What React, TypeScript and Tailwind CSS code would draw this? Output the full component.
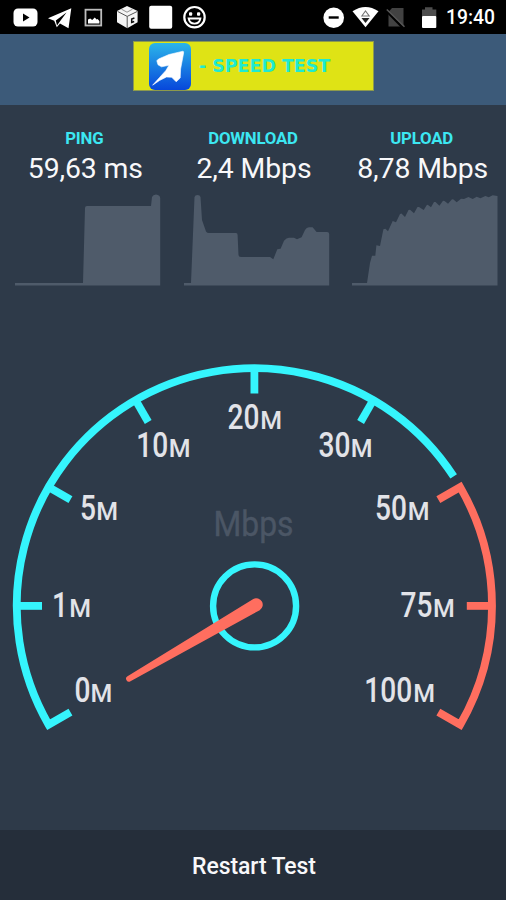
import React from "react";

const CX = 254.4;
const CY = 605.9 - 310;
const R = 237.6;
const R_TICK = 212.4;

function polar(deg: number, r: number): string {
  const a = (deg * Math.PI) / 180;
  return `${(CX + r * Math.cos(a)).toFixed(2)} ${(CY + r * Math.sin(a)).toFixed(2)}`;
}

function StatusBar() {
  return (
    <div className="flex h-[34px] shrink-0 items-center bg-black">
      <svg className="h-[34px] w-[215px]" viewBox="0 0 215 34">
        <rect x="13.5" y="8.5" width="24" height="18" rx="4.5" fill="#fff" />
        <path d="M23 13.500l6.500 4-6.500 4z" fill="#000" />
        <path d="M48 18.3L71.3 8.2 68.5 28.3 60 23.6 56.8 27.2 54.200 20.8z" fill="#fff" />
        <path d="M55.8 20.6L66.5 12.5 59.500 22 57 25.600z" fill="#000" />
        <rect x="85.5" y="9.7" width="15.7" height="15.8" fill="none" stroke="#bdbdbd" strokeWidth="1.8" />
        <path d="M88 23.500v-4l2.2-1 2 1.500 2.6-2.400 1.8 1.900 1-.6 1.8 2V23.500z" fill="#fff" />
        <path d="M127 6l10.6 5v11.2L127.300 28.300 117 22.200V11z" fill="#f4f4f4" />
        <path d="M117.500 11.400L127.200 16.400 137.400 11.400M127.200 16.400V28" fill="none" stroke="#555" strokeWidth="1" />
        <path d="M121.500 9.200l5.500 3 5.500-3" fill="none" stroke="#777" strokeWidth=".8" />
        <path d="M134.400 18l-2.700 1v3.500l2.500-1" fill="none" stroke="#111" strokeWidth="1.500" />
        <rect x="149.200" y="5.700" width="23" height="23" rx="2" fill="#fff" />
        <circle cx="194.500" cy="17.200" r="10.200" fill="none" stroke="#fff" strokeWidth="2.200" />
        <rect x="189" y="12.300" width="3.200" height="3.500" rx="1" fill="#fff" />
        <rect x="197" y="12.300" width="3.200" height="3.500" rx="1" fill="#fff" />
        <path d="M188.600 18.500h11.800c-.6 3.300-3 5.100-5.900 5.100s-5.300-1.800-5.900-5.100z" fill="none" stroke="#fff" strokeWidth="1.800" />
      </svg>
      <svg className="ml-auto h-[34px] w-[126px]" viewBox="320 0 126 34">
        <circle cx="333.700" cy="17.700" r="10.300" fill="#fff" />
        <rect x="328.700" y="16.300" width="10" height="2.400" fill="#000" />
        <path d="M352.500 11.300Q365.500 2.500 378.500 11.300L365.500 27.300z" fill="#fff" />
        <path d="M361.800 16l3.700-5 3.700 5z" fill="none" stroke="#777" strokeWidth="1.100" />
        <path d="M361.500 18h8l-4 5z" fill="#222" />
        <path d="M392 8h11.500v18.500H388.500V12z" fill="#424242" />
        <path d="M386 10.500L403 28" stroke="#000" strokeWidth="2.500" />
        <path d="M386.800 9.500L404.500 26.800" stroke="#555" strokeWidth="1.500" />
        <path d="M422 9.500h3V7.300h7.500v2.200h3.800V16.500H422z" fill="#4d4d4d" />
        <rect x="422" y="16" width="14.300" height="12" rx="1" fill="#fff" />
      </svg>
      <span className="w-[60px] whitespace-nowrap pt-[2px] text-[19.300px] leading-none font-medium text-white">19:40</span>
    </div>
  );
}

function Header() {
  return (
    <header className="flex h-[71px] shrink-0 items-start bg-[#3c5a79] pt-[7px] pl-[133px]">
      <div className="flex h-[50px] w-[241px] items-center border border-[#8d9a4c] bg-[#dfe315] pl-[15px]">
        <svg className="h-[47px] w-[42px] shrink-0" viewBox="0 0 42 47">
          <defs>
            <linearGradient id="logo" x1="0" y1="0" x2="0" y2="1">
              <stop offset="0" stopColor="#2bb5ea" />
              <stop offset="1" stopColor="#0747db" />
            </linearGradient>
          </defs>
          <rect width="42" height="47" rx="6" fill="url(#logo)" />
          <path d="M34 8.200Q34.800 8.300 34.600 10L31.600 26 31.200 35 27.200 38.800 22.700 34.300 17.500 34 10.500 37.500 3.600 42.200 10.500 34.500 16.700 27.700 20 22.300 12.500 23.800 9 21.800 7.800 17.800 9.500 16 20 11.500z" fill="#fff" stroke="#fff" strokeWidth=".6" strokeLinejoin="round" />
        </svg>
        <span className="mt-[1px] ml-[8px] whitespace-pre font-['DejaVu_Sans',sans-serif] text-[17.500px] leading-none font-bold tracking-[-0.050px] text-[#20ead0]">- SPEED TEST</span>
      </div>
    </header>
  );
}

const metrics = [
  {
    label: "PING",
    value: "59,63 ms",
    shape: "M0 90H68L70 15Q70 13 72 13H136L137 4Q138 1.500 141 1.500Q145.200 2 145.200 5V92.500H0z",
  },
  {
    label: "DOWNLOAD",
    value: "2,4 Mbps",
    shape:
      "M0 90H7L10.500 4Q11 2 13.500 2T16.500 4L18 27 22 38.500Q23 40 25 40H52Q53.600 40 53.600 42L54.500 62Q54.500 64 57 64H86L89.300 66.300 93.300 56.300 96.600 55.700 100 47.700Q102.500 44.700 105 44.700H110L113 46.300 117.600 44.300 121 37Q122.500 34.300 125 34.300H128.600L132.600 39H143Q145.200 39 145.200 41V92.500H0z",
  },
  {
    label: "UPLOAD",
    value: "8,78 Mbps",
    shape:
      "M0 90H15L18 70 20 62.700H23.300L24.400 52.300 28 53 31.400 36.300 33.400 35.700 36 38.300 40.700 28 44 29.300 48 21 49.500 20.500 53 24 56.500 17 58 16.700 62 20.300 65.500 14 67 14 71.700 17 75 11.700 76 12 79 14.300 82 9 83.500 9 87.400 12.700 91 7.700 92.500 8 96 10.700 100 6.300 101.500 6.500 104.700 9.300 109 5.700 112 6 116.400 4 120.700 6 124.700 3.700 128.400 5.300 133.400 3 136.700 4.300 140.700 2.300 145.500 3V92.500H0z",
  },
];

function Metrics() {
  return (
    <section className="grid shrink-0 grid-cols-3">
      {metrics.map((m) => (
        <div key={m.label} className="flex flex-col">
          <div className="mt-[23px] text-center text-[16.800px] leading-5 font-bold tracking-[-0.200px] text-[#3ce7f2]">{m.label}</div>
          <div className="mt-[5px] whitespace-nowrap pl-[2px] text-center text-[28.400px] leading-[32px] tracking-[-0.120px] text-[#f8f8fa]">{m.value}</div>
          <svg className="mt-[8px] ml-[15px] h-[94px] w-[146px]" viewBox="0 0 146 94">
            <path d={m.shape} fill="#4f5b6a" />
          </svg>
        </div>
      ))}
    </section>
  );
}

// end: right edge of the digits, unit: left edge of the small M, y: baseline
const marks = [
  { n: "0", end: 89.8, unit: 92.3, y: 701.7 },
  { n: "1", end: 67.5, unit: 71, y: 616.7 },
  { n: "5", end: 95.5, unit: 98, y: 520 },
  { n: "10", end: 167.7, unit: 170.4, y: 456.7 },
  { n: "20", end: 259, unit: 262, y: 429.3 },
  { n: "30", end: 350, unit: 352.4, y: 456.7 },
  { n: "50", end: 406.5, unit: 409.5, y: 520 },
  { n: "75", end: 432, unit: 434.7, y: 616.7 },
  { n: "100", end: 411.7, unit: 415, y: 701.7 },
];

function Gauge() {
  return (
    <svg className="mt-[23px] h-[440px] w-[506px] shrink-0" viewBox="0 0 506 440">
      <g fill="none" strokeWidth="7.800">
        <g stroke="#35f5fd">
          <path d={`M${polar(150, R_TICK)}L${polar(150, R)}A${R} ${R} 0 0 1 ${polar(-33, R)}`} />
          {[180, 210, 240, 270, 300].map((a) => (
            <path key={a} d={`M${polar(a, R_TICK)}L${polar(a, R)}`} />
          ))}
          <circle cx="254.600" cy={CY} r="41.500" strokeWidth="6.400" />
        </g>
        <g stroke="#ff6e5f">
          <path d={`M${polar(-30, R_TICK)}L${polar(-30, R)}A${R} ${R} 0 0 1 ${polar(30, R)}L${polar(30, R_TICK)}`} />
          <path d={`M${polar(0, R_TICK)}L${polar(0, R)}`} />
        </g>
      </g>
      <path d="M127.500 366.200L253.300 288.900A6.500 6.500 0 0 1 259.700 300.200L130.500 371.200A2.900 2.900 0 0 1 127.500 366.200z" fill="#ff6e5f" />
      <g fill="#e2e3e8" fontWeight="500">
        {marks.map((m) => (
          <text key={m.n} y={m.y - 310}>
            <tspan x={m.end + 0.6 - m.n.length * 16} fontSize="35" textLength={m.n.length * 16} lengthAdjust="spacingAndGlyphs">{m.n}</tspan>
            <tspan x={m.unit - 1.700} fontSize="26.500" textLength="21.800" lengthAdjust="spacingAndGlyphs">M</tspan>
          </text>
        ))}
      </g>
      <text x="213.500" y="226" fontSize="35" textLength="80" lengthAdjust="spacingAndGlyphs" fill="#4b5665" fontWeight="400" stroke="#4b5665" strokeWidth=".4">Mbps</text>
    </svg>
  );
}

export default function App() {
  return (
    <main className="flex h-[900px] w-[506px] flex-col overflow-hidden bg-[#2e3a49] font-[Roboto,sans-serif]">
      <StatusBar />
      <Header />
      <Metrics />
      <Gauge />
      <button className="mt-auto h-[70px] w-full shrink-0 bg-[#252e3a] pt-[2px] pl-[2px] text-center text-[23px] leading-none font-medium tracking-[-0.100px] text-[#f8f8fa]">Restart Test</button>
    </main>
  );
}
